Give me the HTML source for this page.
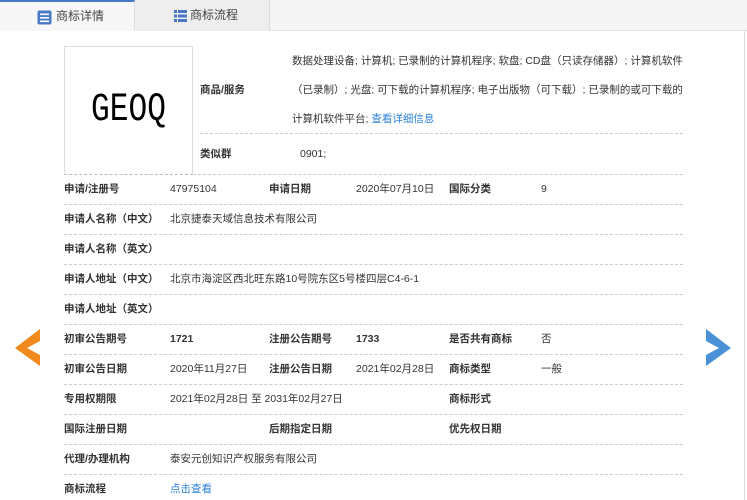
<!DOCTYPE html>
<html><head><meta charset="utf-8"><style>
*{margin:0;padding:0;box-sizing:border-box}
body{width:747px;height:500px;background:#fff;font-family:"Liberation Sans","Noto Sans CJK SC",sans-serif;font-size:10.5px;color:#333;position:relative;overflow:hidden}
.tabs{position:absolute;left:0;top:0;width:747px;height:31px;background:#f5f5f5;border-bottom:1px solid #e3e3e3}
.tab{position:absolute;top:0;height:31px;line-height:31px;font-size:12px;color:#444}
.t1{left:0;width:135px;background:#f7f7f7;border-top:2px solid #4a78c8;border-right:1px solid #e0e0e0;padding-left:56px;line-height:29px}
.t2{left:135px;width:135px;background:#eee;border-right:1px solid #ddd;padding-left:55px}
.rb{position:absolute;left:744px;top:31px;width:1px;height:469px;background:#ddd}
.img{position:absolute;left:64px;top:46px;width:129px;height:129px;border:1px solid #ddd;border-bottom:1px dashed #bbb}
.img span{position:absolute;left:0;width:127px;top:44px;text-align:center;font-family:"Liberation Mono",monospace;font-size:40px;line-height:40px;color:#000;transform:scaleX(0.78)}
.a{position:absolute;white-space:nowrap;line-height:14px}
.b{font-weight:bold;color:#333}
.line{position:absolute;left:64px;width:619px;border-top:1px dashed #ccc}
.blue{color:#2a7fd6}
</style></head><body>
<div class="tabs">
<div class="tab t1"><svg style="position:absolute;left:37px;top:8px" width="15" height="15"><rect x="0.5" y="0.5" width="14" height="14" rx="2" fill="#4a78c8"/><rect x="3" y="3.5" width="9" height="1.6" fill="#fff"/><rect x="3" y="7" width="9" height="1.6" fill="#fff"/><rect x="3" y="10.5" width="9" height="1.6" fill="#fff"/></svg>商标详情</div>
<div class="tab t2"><svg style="position:absolute;left:39px;top:10px" width="13" height="12"><g fill="#4a78c8"><rect x="0" y="0" width="3" height="3"/><rect x="4" y="0" width="9" height="3"/><rect x="0" y="4.5" width="3" height="3"/><rect x="4" y="4.5" width="9" height="3"/><rect x="0" y="9" width="3" height="3"/><rect x="4" y="9" width="9" height="3"/></g></svg>商标流程</div>
</div>
<div class="rb"></div>
<div class="img"><span>GEOQ</span></div>
<div class="a" style="left:292px;top:54px">数据处理设备; 计算机; 已录制的计算机程序; 软盘; CD盘（只读存储器）; 计算机软件</div>
<div class="a b" style="left:200px;top:83px">商品/服务</div>
<div class="a" style="left:292px;top:83px">（已录制）; 光盘; 可下载的计算机程序; 电子出版物（可下载）; 已录制的或可下载的</div>
<div class="a" style="left:292px;top:112px">计算机软件平台; <span class="blue">查看详细信息</span></div>
<div class="line" style="left:200px;width:483px;top:133px"></div>
<div class="a b" style="left:200px;top:147px">类似群</div>
<div class="a" style="left:300px;top:147px">0901;</div>
<div class="line" style="left:193px;width:490px;top:174px"></div>

<div class="a b" style="left:64px;top:182px">申请/注册号</div><div class="a" style="left:170px;top:182px">47975104</div>
<div class="a b" style="left:269px;top:182px">申请日期</div><div class="a" style="left:356px;top:182px">2020年07月10日</div>
<div class="a b" style="left:449px;top:182px">国际分类</div><div class="a" style="left:541px;top:182px">9</div>
<div class="line" style="top:204px"></div>
<div class="a b" style="left:64px;top:212px">申请人名称（中文）</div><div class="a" style="left:170px;top:212px">北京捷泰天域信息技术有限公司</div>
<div class="line" style="top:234px"></div>
<div class="a b" style="left:64px;top:242px">申请人名称（英文）</div>
<div class="line" style="top:264px"></div>
<div class="a b" style="left:64px;top:272px">申请人地址（中文）</div><div class="a" style="left:170px;top:272px">北京市海淀区西北旺东路10号院东区5号楼四层C4-6-1</div>
<div class="line" style="top:294px"></div>
<div class="a b" style="left:64px;top:302px">申请人地址（英文）</div>
<div class="line" style="top:324px"></div>
<div class="a b" style="left:64px;top:332px">初审公告期号</div><div class="a b" style="left:170px;top:332px">1721</div>
<div class="a b" style="left:269px;top:332px">注册公告期号</div><div class="a b" style="left:356px;top:332px">1733</div>
<div class="a b" style="left:449px;top:332px">是否共有商标</div><div class="a" style="left:541px;top:332px">否</div>
<div class="line" style="top:354px"></div>
<div class="a b" style="left:64px;top:362px">初审公告日期</div><div class="a" style="left:170px;top:362px">2020年11月27日</div>
<div class="a b" style="left:269px;top:362px">注册公告日期</div><div class="a" style="left:356px;top:362px">2021年02月28日</div>
<div class="a b" style="left:449px;top:362px">商标类型</div><div class="a" style="left:541px;top:362px">一般</div>
<div class="line" style="top:384px"></div>
<div class="a b" style="left:64px;top:392px">专用权期限</div><div class="a" style="left:170px;top:392px">2021年02月28日 至 2031年02月27日</div>
<div class="a b" style="left:449px;top:392px">商标形式</div>
<div class="line" style="top:414px"></div>
<div class="a b" style="left:64px;top:422px">国际注册日期</div>
<div class="a b" style="left:269px;top:422px">后期指定日期</div>
<div class="a b" style="left:449px;top:422px">优先权日期</div>
<div class="line" style="top:444px"></div>
<div class="a b" style="left:64px;top:452px">代理/办理机构</div><div class="a" style="left:170px;top:452px">泰安元创知识产权服务有限公司</div>
<div class="line" style="top:474px"></div>
<div class="a b" style="left:64px;top:482px">商标流程</div><div class="a blue" style="left:170px;top:482px">点击查看</div>

<svg style="position:absolute;left:15px;top:329px" width="26" height="38"><polygon points="25,0 0,19 25,37 25,26 12,19 25,12" fill="#f08a1c"/></svg>
<svg style="position:absolute;left:706px;top:329px" width="26" height="38"><polygon points="0,0 25,19 0,37 0,26 13,19 0,12" fill="#4a90d6"/></svg>
</body></html>
